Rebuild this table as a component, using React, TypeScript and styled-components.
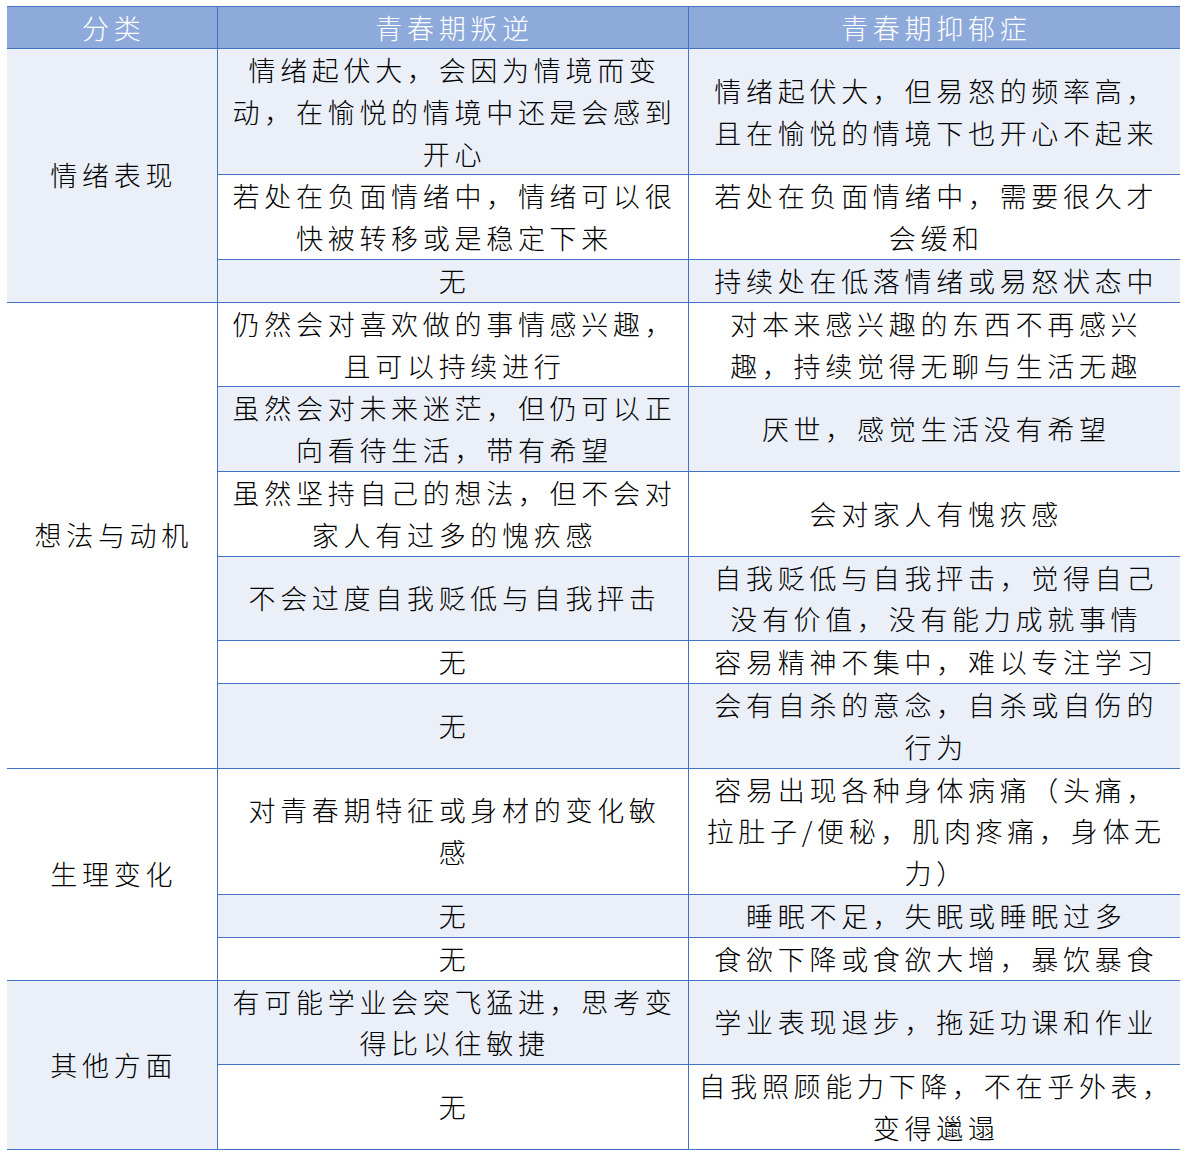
import React from 'react';
import styled, { createGlobalStyle } from 'styled-components';

const GlobalStyle = createGlobalStyle`
  html, body {
    margin: 0;
    padding: 0;
    background: #fff;
  }
`;

const Page = styled.div`
  padding: 6px 12px 0 7px;
`;

const Table = styled.table`
  width: 1173px;
  table-layout: fixed;
  border-collapse: collapse;
  font-family: "Noto Sans CJK SC", "Noto Sans", sans-serif;
  font-weight: 300;
  font-size: 27px;
  letter-spacing: 4.7px;
  color: #000;
`;

const HeadCell = styled.th`
  background: #8eaadb;
  color: #fff;
  font-weight: 300;
  line-height: 41px;
  padding: 0 0 0 4px;
  text-align: center;
  border-top: 1px solid #4472c4;
  border-bottom: 1px solid #4472c4;
  border-left: 1px solid #4472c4;

  &:first-child {
    border-left: none;
  }
`;

const Cell = styled.td<{ $band: boolean }>`
  background: ${(p) => (p.$band ? '#eaeff8' : '#fff')};
  line-height: 41.8px;
  padding: 0 0 0 4px;
  text-align: center;
  vertical-align: middle;
  white-space: nowrap;
  border-bottom: 1px solid #4472c4;
  border-left: 1px solid #4472c4;
`;

const GroupCell = styled(Cell)`
  border-left: none;
`;

type Row = { rebel: string[]; depressed: string[] };
type Group = { name: string; rows: Row[] };

const groups: Group[] = [
  {
    name: '情绪表现',
    rows: [
      {
        rebel: ['情绪起伏大，会因为情境而变', '动，在愉悦的情境中还是会感到', '开心'],
        depressed: ['情绪起伏大，但易怒的频率高，', '且在愉悦的情境下也开心不起来'],
      },
      {
        rebel: ['若处在负面情绪中，情绪可以很', '快被转移或是稳定下来'],
        depressed: ['若处在负面情绪中，需要很久才', '会缓和'],
      },
      { rebel: ['无'], depressed: ['持续处在低落情绪或易怒状态中'] },
    ],
  },
  {
    name: '想法与动机',
    rows: [
      {
        rebel: ['仍然会对喜欢做的事情感兴趣，', '且可以持续进行'],
        depressed: ['对本来感兴趣的东西不再感兴', '趣，持续觉得无聊与生活无趣'],
      },
      {
        rebel: ['虽然会对未来迷茫，但仍可以正', '向看待生活，带有希望'],
        depressed: ['厌世，感觉生活没有希望'],
      },
      {
        rebel: ['虽然坚持自己的想法，但不会对', '家人有过多的愧疚感'],
        depressed: ['会对家人有愧疚感'],
      },
      {
        rebel: ['不会过度自我贬低与自我抨击'],
        depressed: ['自我贬低与自我抨击，觉得自己', '没有价值，没有能力成就事情'],
      },
      { rebel: ['无'], depressed: ['容易精神不集中，难以专注学习'] },
      { rebel: ['无'], depressed: ['会有自杀的意念，自杀或自伤的', '行为'] },
    ],
  },
  {
    name: '生理变化',
    rows: [
      {
        rebel: ['对青春期特征或身材的变化敏', '感'],
        depressed: ['容易出现各种身体病痛（头痛，', '拉肚子/便秘，肌肉疼痛，身体无', '力）'],
      },
      { rebel: ['无'], depressed: ['睡眠不足，失眠或睡眠过多'] },
      { rebel: ['无'], depressed: ['食欲下降或食欲大增，暴饮暴食'] },
    ],
  },
  {
    name: '其他方面',
    rows: [
      {
        rebel: ['有可能学业会突飞猛进，思考变', '得比以往敏捷'],
        depressed: ['学业表现退步，拖延功课和作业'],
      },
      { rebel: ['无'], depressed: ['自我照顾能力下降，不在乎外表，', '变得邋遢'] },
    ],
  },
];

const Lines = ({ lines }: { lines: string[] }) => (
  <>
    {lines.map((line, i) => (
      <React.Fragment key={i}>
        {i > 0 && <br />}
        {line}
      </React.Fragment>
    ))}
  </>
);

const App = () => {
  let index = 0;
  return (
    <>
      <GlobalStyle />
      <Page>
        <Table>
          <colgroup>
            <col style={{ width: 210 }} />
            <col style={{ width: 471 }} />
            <col style={{ width: 492 }} />
          </colgroup>
          <thead>
            <tr>
              <HeadCell>分类</HeadCell>
              <HeadCell>青春期叛逆</HeadCell>
              <HeadCell>青春期抑郁症</HeadCell>
            </tr>
          </thead>
          <tbody>
            {groups.map((group) =>
              group.rows.map((row, i) => {
                const band = index++ % 2 === 0;
                return (
                  <tr key={`${group.name}-${i}`}>
                    {i === 0 && (
                      <GroupCell $band={band} rowSpan={group.rows.length}>
                        {group.name}
                      </GroupCell>
                    )}
                    <Cell $band={band}>
                      <Lines lines={row.rebel} />
                    </Cell>
                    <Cell $band={band}>
                      <Lines lines={row.depressed} />
                    </Cell>
                  </tr>
                );
              })
            )}
          </tbody>
        </Table>
      </Page>
    </>
  );
};

export default App;
